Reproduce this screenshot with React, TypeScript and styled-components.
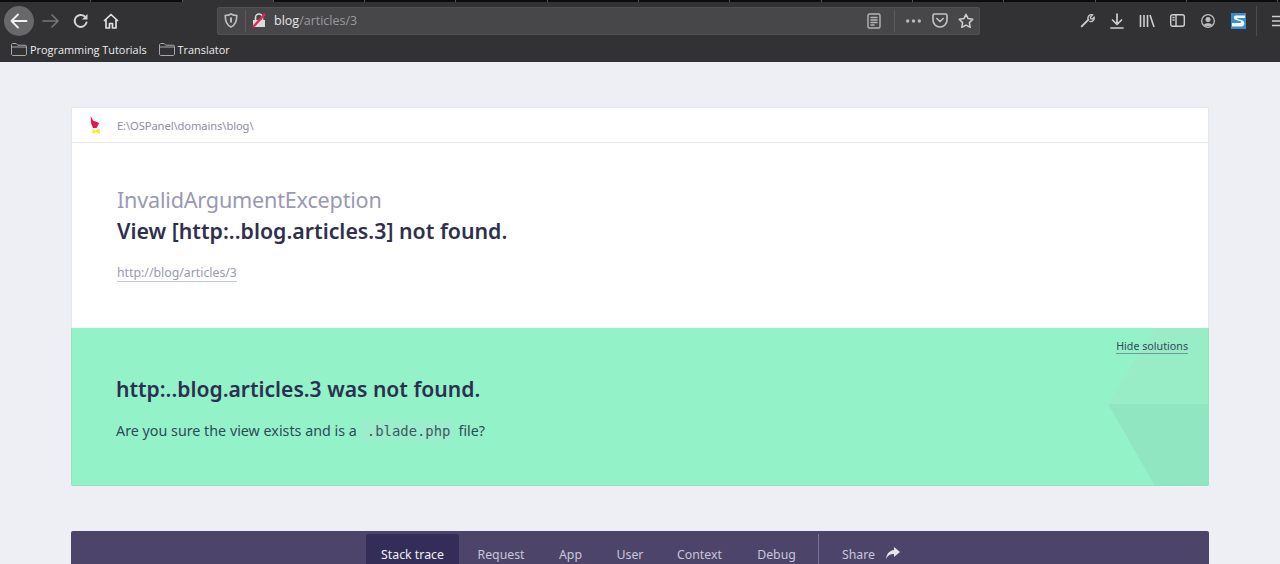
import React from "react";
import styled, { createGlobalStyle } from "styled-components";

const Global = createGlobalStyle`
  html, body { margin: 0; padding: 0; height: 564px; overflow: hidden; background: #eeeff4; }
  body { font-family: "Noto Sans", "Open Sans", sans-serif; }
  * { box-sizing: border-box; }
`;

const Page = styled.div`
  width: 1280px;
  height: 564px;
  display: flex;
  flex-direction: column;
  overflow: hidden;
`;

const Chrome = styled.header`
  height: 62px;
  flex: none;
  background: #323234;
  display: flex;
  flex-direction: column;
`;

const TabStrip = styled.div`
  height: 2px;
  background: #0c0c0d;
  display: flex;
`;

const TabTick = styled.span<{ $current?: boolean }>`
  width: 91.3px;
  height: 2px;
  border-right: 1px solid #55555a;
  flex: none;
  background: ${(p) => (p.$current ? "#323234" : "transparent")};
`;

const Toolbar = styled.div`
  height: 37px;
  flex: none;
  display: flex;
  align-items: center;
`;

const NavGroup = styled.div`
  width: 217px;
  flex: none;
  display: flex;
  align-items: center;
  padding-left: 4px;
`;

const BackButton = styled.div`
  width: 30px;
  height: 30px;
  border-radius: 50%;
  background: #68686b;
  display: flex;
  align-items: center;
  justify-content: center;
  flex: none;
`;

const NavIcon = styled.div<{ $gap: number }>`
  margin-left: ${(p) => p.$gap}px;
  display: flex;
  flex: none;
`;

const UrlBar = styled.div`
  width: 763px;
  height: 28px;
  flex: none;
  background: #474749;
  border: 1px solid #515154;
  border-radius: 2px;
  display: flex;
  align-items: center;
`;

const UrlLeft = styled.div`
  display: flex;
  align-items: center;
  flex: 1;
  padding-left: 6px;
`;

const Divider = styled.span<{ $ml: number; $mr: number }>`
  width: 1px;
  height: 22px;
  background: #5c5c5f;
  margin: 0 ${(p) => p.$mr}px 0 ${(p) => p.$ml}px;
  flex: none;
`;

const UrlText = styled.span`
  margin-left: 8px;
  font-size: 12.5px;
  color: #9a9a9d;
  font-family: "Open Sans", sans-serif;
`;

const UrlHost = styled.span`
  color: #e6e6e8;
`;

const UrlRight = styled.div`
  display: flex;
  align-items: center;
  padding-right: 5px;
`;

const UrlIcon = styled.div<{ $mr: number }>`
  display: flex;
  margin-right: ${(p) => p.$mr}px;
`;

const ToolIcons = styled.div`
  flex: 1;
  display: flex;
  align-items: center;
  padding-left: 100px;
`;

const ToolIcon = styled.div<{ $w: number }>`
  width: ${(p) => p.$w}px;
  display: flex;
  flex: none;
`;

const ToolDivider = styled.span`
  width: 1px;
  height: 30px;
  background: #4c4c4f;
  flex: none;
  margin-left: 10px;
`;

const MenuIcon = styled.div`
  margin-left: 15px;
  display: flex;
  flex: none;
`;

const Bookmarks = styled.nav`
  height: 23px;
  flex: none;
  display: flex;
  align-items: center;
  padding: 0 0 3px 11px;
  gap: 12px;
`;

const Bookmark = styled.span`
  display: flex;
  align-items: center;
  gap: 3px;
  color: #ececee;
  font-size: 10.9px;
  font-family: "Open Sans", sans-serif;
`;

const Content = styled.main`
  flex: 1;
  padding: 45px 71px 0;
  display: flex;
  flex-direction: column;
`;

const Card = styled.section`
  width: 1138px;
  background: #fff;
  border: 1px solid #e4e6ec;
  border-radius: 2px;
  display: flex;
  flex-direction: column;
  height: 379px;
  flex: none;
`;

const CardHeader = styled.div`
  height: 35px;
  flex: none;
  border-bottom: 1px solid #e7e8ee;
  display: flex;
  align-items: center;
  padding-left: 16px;
`;

const PathText = styled.span`
  font-size: 11.2px;
  letter-spacing: -0.1px;
  color: #8f8ea6;
  margin-left: 15px;
`;

const CardBody = styled.div`
  height: 185px;
  flex: none;
  padding: 42px 0 0 45px;
`;

const ExceptionClass = styled.div`
  font-size: 21.6px;
  line-height: 30px;
  letter-spacing: -0.2px;
  color: #9a99b2;
`;

const Message = styled.h1`
  margin: 0;
  font-size: 21.3px;
  line-height: 32px;
  font-weight: 600;
  color: #2f2f4e;
`;

const RequestLink = styled.a`
  display: inline-block;
  margin-top: 18px;
  font-size: 12.3px;
  line-height: 16px;
  color: #9a99b2;
  border-bottom: 1px solid #c6c6d4;
`;

const Solution = styled.div`
  flex: 1;
  margin: 0 -1px -1px;
  background: #94f2c8;
  border: 1px solid #8ee4bd;
  border-top: 0;
  border-radius: 0 0 2px 2px;
  position: relative;
  overflow: hidden;
  padding: 46px 0 0 44px;
`;

const Facets = styled.svg`
  position: absolute;
  right: 0;
  top: 0;
`;

const HideLink = styled.a`
  position: absolute;
  top: 11px;
  right: 20px;
  font-size: 10.7px;
  line-height: 14px;
  color: #35495a;
  border-bottom: 1px solid #6f9c92;
`;

const SolutionTitle = styled.h2`
  margin: 0;
  position: relative;
  font-size: 21.1px;
  line-height: 30px;
  font-weight: 600;
  color: #2c3050;
`;

const SolutionText = styled.p`
  margin: 15px 0 0;
  position: relative;
  font-size: 14.3px;
  line-height: 24px;
  color: #2f4a56;
`;

const Code = styled.code`
  font-family: "DejaVu Sans Mono", monospace;
  font-size: 13.9px;
  background: #9cedcb;
  color: #3a5a60;
  border-radius: 2px;
  padding: 2px 3px 2px 7px;
  margin: 0 5px 0 3px;
`;

const TabBar = styled.nav`
  margin-top: 45px;
  width: 1138px;
  height: 60px;
  flex: none;
  background: #4c4569;
  border-radius: 2px 2px 0 0;
  display: flex;
  padding: 3px 0 0 295px;
`;

const Tab = styled.span<{ $active?: boolean; $w: number }>`
  width: ${(p) => p.$w}px;
  flex: none;
  height: 57px;
  padding-top: 13px;
  text-align: center;
  font-size: 12.3px;
  line-height: 16px;
  border-radius: 2px 2px 0 0;
  color: ${(p) => (p.$active ? "#f1f0f6" : "#c9c6d8")};
  background: ${(p) => (p.$active ? "#342d58" : "transparent")};
`;

const TabDivider = styled.span`
  width: 1px;
  height: 30px;
  background: #787291;
  flex: none;
  margin-left: 2px;
`;

const ShareTab = styled.span`
  display: flex;
  align-items: flex-start;
  gap: 11px;
  margin-left: 23px;
  padding-top: 13px;
  font-size: 12.3px;
  line-height: 16px;
  color: #c9c6d8;
`;

const Folder = () => (
  <svg width="16" height="13" viewBox="0 0 16 13" fill="none" stroke="#a8a8aa" strokeWidth="1">
    <path d="M.5 11V2c0-.8.5-1.500 1.300-1.500h3.400l1.600 1.700h7.400c.8 0 1.300.5 1.300 1.300V11c0 .8-.5 1.500-1.300 1.500H1.800C1 12.500.5 11.800.5 11z" />
    <path d="M.5 4h15" />
  </svg>
);

const tabs: [string, number][] = [
  ["Request", 84],
  ["App", 55],
  ["User", 64],
  ["Context", 75],
  ["Debug", 79],
];

export default function App() {
  return (
    <Page>
      <Global />
      <Chrome>
        <TabStrip>
          {Array.from({ length: 14 }).map((_, i) => (
            <TabTick key={i} $current={i === 2} />
          ))}
        </TabStrip>
        <Toolbar>
          <NavGroup>
            <BackButton>
              <svg width="18" height="16" viewBox="0 0 18 16" fill="none" stroke="#f1f1f2" strokeWidth="1.8" strokeLinecap="round" strokeLinejoin="round">
                <path d="M1.500 8h15M8 1.500 1.500 8 8 14.500" />
              </svg>
            </BackButton>
            <NavIcon $gap={8}>
              <svg width="17" height="14" viewBox="0 0 17 14" fill="none" stroke="#77777a" strokeWidth="1.600" strokeLinecap="round" strokeLinejoin="round">
                <path d="M1 7h15M10 1l6 6-6 6" />
              </svg>
            </NavIcon>
            <NavIcon $gap={14}>
              <svg width="16" height="16" viewBox="0 0 16 16" fill="none" stroke="#d4d4d6" strokeWidth="2" strokeLinecap="round">
                <path d="M13.500 9.500A6 6 0 1 1 11.800 3.500" />
                <path d="M14.500 1v5.500H9" fill="#d4d4d6" stroke="none" />
              </svg>
            </NavIcon>
            <NavIcon $gap={14}>
              <svg width="16" height="16" viewBox="0 0 16 16" fill="none" stroke="#e0e0e2" strokeWidth="1.700" strokeLinejoin="round">
                <path d="M1 8l7-6.500L15 8M3 6.500V15h3.500v-4.500h3V15H13V6.500" />
              </svg>
            </NavIcon>
          </NavGroup>
          <UrlBar>
            <UrlLeft>
              <svg width="14" height="15" viewBox="0 0 14 15" fill="none" stroke="#bdbdbf" strokeWidth="1.600">
                <path d="M7 1C5 2.200 3 2.500 1.200 2.500c0 5 1 9.500 5.800 11.500 4.800-2 5.800-6.500 5.800-11.500C11 2.500 9 2.200 7 1z" />
                <path d="M7 4.500v5" strokeWidth="2" />
              </svg>
              <Divider $ml={7} $mr={6} />
              <svg width="14" height="15" viewBox="0 0 14 15" fill="none">
                <path d="M1 7h12v7H1z" fill="#dcdcde" />
                <path d="M3.500 7V4.500a3.500 3.500 0 0 1 7 0V7" stroke="#dcdcde" strokeWidth="1.600" />
                <path d="M1 14 13 1" stroke="#e22850" strokeWidth="2.400" />
              </svg>
              <UrlText>
                <UrlHost>blog</UrlHost>/articles/3
              </UrlText>
            </UrlLeft>
            <UrlRight>
              <UrlIcon $mr={13}>
                <svg width="14" height="16" viewBox="0 0 14 16" fill="none" stroke="#b4b4b6" strokeWidth="1.400">
                  <rect x="1" y="1" width="12" height="14" rx="1.500" />
                  <path d="M3.500 4.500h7M3.500 7h7M3.500 9.500h7M3.500 12h4" />
                </svg>
              </UrlIcon>
              <Divider $ml={0} $mr={11} />
              <UrlIcon $mr={11}>
                <svg width="15" height="4" viewBox="0 0 15 4" fill="#b9b9bb">
                  <circle cx="1.700" cy="2" r="1.700" />
                  <circle cx="7.500" cy="2" r="1.700" />
                  <circle cx="13.300" cy="2" r="1.700" />
                </svg>
              </UrlIcon>
              <UrlIcon $mr={10}>
                <svg width="16" height="15" viewBox="0 0 16 15" fill="none" stroke="#c4c4c6" strokeWidth="1.600" strokeLinecap="round" strokeLinejoin="round">
                  <path d="M1 2.500C1 1.500 1.500 1 2.500 1h11c1 0 1.500.5 1.500 1.500V7a7 7 0 0 1-14 0z" />
                  <path d="M4.800 5.500 8 8.500l3.200-3" />
                </svg>
              </UrlIcon>
              <UrlIcon $mr={0}>
                <svg width="16" height="16" viewBox="0 0 16 16" fill="none" stroke="#cfcfd1" strokeWidth="1.500" strokeLinejoin="round">
                  <path d="M8 1.300l2.100 4.300 4.700.7-3.400 3.300.8 4.700L8 12.100l-4.200 2.200.8-4.700L1.200 6.300l4.700-.7z" />
                </svg>
              </UrlIcon>
            </UrlRight>
          </UrlBar>
          <ToolIcons>
            <ToolIcon $w={30}>
              <svg width="15" height="15" viewBox="0 0 16 16" fill="none" stroke="#cfcfd1" strokeLinecap="round">
                <path d="M1.800 14.200 9 7" strokeWidth="2" />
                <path d="M8.500 6.500C8 3.500 10.500 1 13.500 2l-2.500 2.500.5 1.500 1.500.5L15 4.500c.8 2.700-1.700 5.200-4.500 4.500" strokeWidth="1.400" />
              </svg>
            </ToolIcon>
            <ToolIcon $w={29}>
              <svg width="14" height="16" viewBox="0 0 14 16" fill="none" stroke="#cfcfd1" strokeWidth="1.700" strokeLinecap="round" strokeLinejoin="round">
                <path d="M7 1v10M2.500 7 7 11.500 11.500 7M1 15h12" />
              </svg>
            </ToolIcon>
            <ToolIcon $w={31}>
              <svg width="16" height="14" viewBox="0 0 16 14" fill="none" stroke="#cfcfd1" strokeWidth="1.600">
                <path d="M1.500 1v12M5 1v12M8.500 1v12M11 1l4 12" />
              </svg>
            </ToolIcon>
            <ToolIcon $w={31}>
              <svg width="15" height="13" viewBox="0 0 15 13" fill="none" stroke="#cfcfd1" strokeWidth="1.400">
                <rect x=".7" y=".7" width="13.600" height="11.600" rx="2" />
                <path d="M6 .7v11.600M2.500 3.500h2M2.500 6h2" />
              </svg>
            </ToolIcon>
            <ToolIcon $w={30}>
              <svg width="14" height="14" viewBox="0 0 14 14" fill="none">
                <circle cx="7" cy="7" r="6.300" stroke="#bdbdbf" strokeWidth="1.300" />
                <circle cx="7" cy="5.500" r="2.500" fill="#bdbdbf" />
                <path d="M2.800 11c1-2.400 7.400-2.400 8.400 0-1.800 1.800-6.600 1.800-8.400 0z" fill="#bdbdbf" />
              </svg>
            </ToolIcon>
            <ToolIcon $w={15}>
              <svg width="15" height="16" viewBox="0 0 15 16">
                <rect width="15" height="16" fill="#3a8ccb" />
                <path d="M14 2.500H5C2.500 2.500 2 6.200 5 7l4.500 1.200c1.200.4.800 1.800-.5 1.800H1v3.500h9.500c3.500 0 4-5.300.5-6.300L6.800 6c-.8-.3-.5-1 .3-1H14z" fill="#f4f7fa" />
              </svg>
            </ToolIcon>
            <ToolDivider />
            <MenuIcon>
              <svg width="9" height="12" viewBox="0 0 9 12" fill="none" stroke="#cfcfd1" strokeWidth="1.500">
                <path d="M0 1.500h9M0 6h9M0 10.500h9" />
              </svg>
            </MenuIcon>
          </ToolIcons>
        </Toolbar>
        <Bookmarks>
          <Bookmark>
            <Folder />
            Programming Tutorials
          </Bookmark>
          <Bookmark>
            <Folder />
            Translator
          </Bookmark>
        </Bookmarks>
      </Chrome>
      <Content>
        <Card>
          <CardHeader>
            <svg width="14" height="20" viewBox="0 0 14 20">
              <path d="M2.700 1 5 5.500 11.300 8 8.500 13H5L3 8z" fill="#e3164f" />
              <path d="M4 14l3.500 1.500 4-2 .5 5.500-4-2-3 2z" fill="#fde23a" />
            </svg>
            <PathText>E:\OSPanel\domains\blog\</PathText>
          </CardHeader>
          <CardBody>
            <ExceptionClass>InvalidArgumentException</ExceptionClass>
            <Message>View [http:..blog.articles.3] not found.</Message>
            <RequestLink>http://blog/articles/3</RequestLink>
          </CardBody>
          <Solution>
            <Facets width="100" height="158" viewBox="0 0 100 158">
              <path d="M0 76 47 0h53v76z" fill="#98ecc6" />
              <path d="M0 76h100v82H47z" fill="#90e6c0" />
            </Facets>
            <HideLink>Hide solutions</HideLink>
            <SolutionTitle>http:..blog.articles.3 was not found.</SolutionTitle>
            <SolutionText>
              Are you sure the view exists and is a<Code>.blade.php</Code>file?
            </SolutionText>
          </Solution>
        </Card>
        <TabBar>
          <Tab $active $w={93}>Stack trace</Tab>
          {tabs.map(([label, w]) => (
            <Tab key={label} $w={w}>{label}</Tab>
          ))}
          <TabDivider />
          <ShareTab>
            Share
            <svg width="14" height="13" viewBox="0 0 14 13" fill="#e6e5ee">
              <path d="M8 0l6 5-6 5V7C4.500 7 2 8 0 12c.5-5 3.500-8.500 8-9z" />
            </svg>
          </ShareTab>
        </TabBar>
      </Content>
    </Page>
  );
}
